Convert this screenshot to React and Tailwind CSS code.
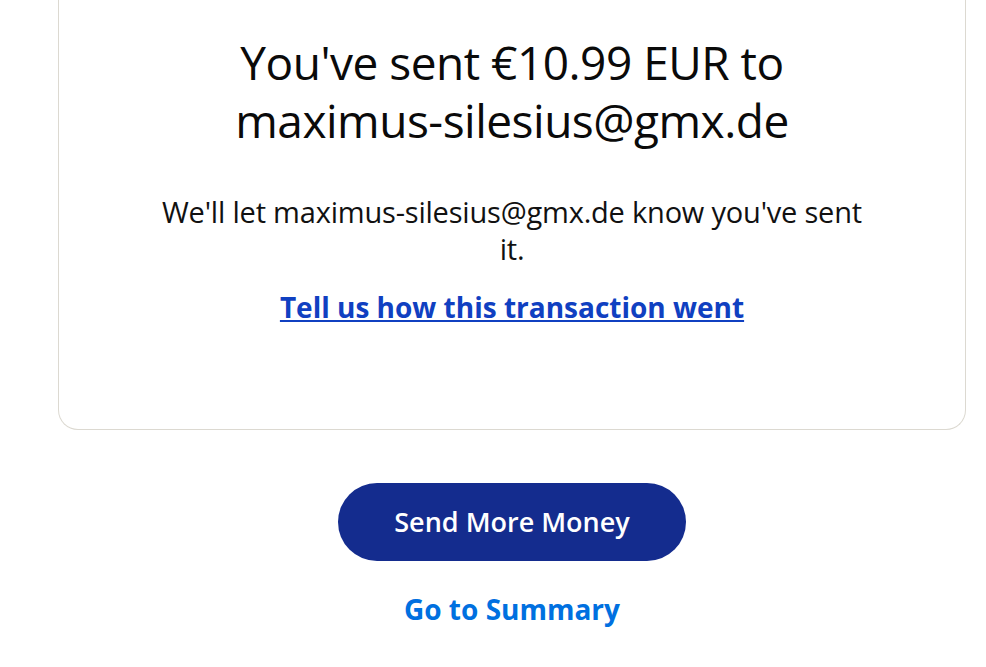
export default function App() {
  return (
    <div className="min-h-screen bg-white" style={{ fontFamily: '"Open Sans", "Noto Sans", sans-serif' }}>
      <div className="ml-[58px] w-[908px]">
        <div className="rounded-b-[20px] border border-t-0 border-[#dcd9d1] pt-[33px] pb-[104px] text-center">
          <h1 className="mx-auto text-[46px] leading-[58px] text-[#0a0a0a] tracking-[-0.5px]">
            You've sent €10.99 EUR to
            <br />
            maximus-silesius@gmx.de
          </h1>
          <p className="mx-auto mt-[44px] w-[730px] text-[29px] leading-[37px] text-[#111] tracking-[-0.2px]">
            We'll let maximus-silesius@gmx.de know you've sent it.
          </p>
          <a href="#" className="mt-[22px] inline-block text-[28px] font-bold leading-[36px] text-[#1040c1] underline">
            Tell us how this transaction went
          </a>
        </div>
        <div className="flex flex-col items-center pt-[53px]">
          <button className="h-[78px] w-[348px] rounded-full bg-[#142c8e] text-[27px] font-semibold text-white">
            Send More Money
          </button>
          <a href="#" className="mt-[30px] text-[28px] leading-[36px] font-bold text-[#0070e0]">
            Go to Summary
          </a>
        </div>
      </div>
    </div>
  );
}
